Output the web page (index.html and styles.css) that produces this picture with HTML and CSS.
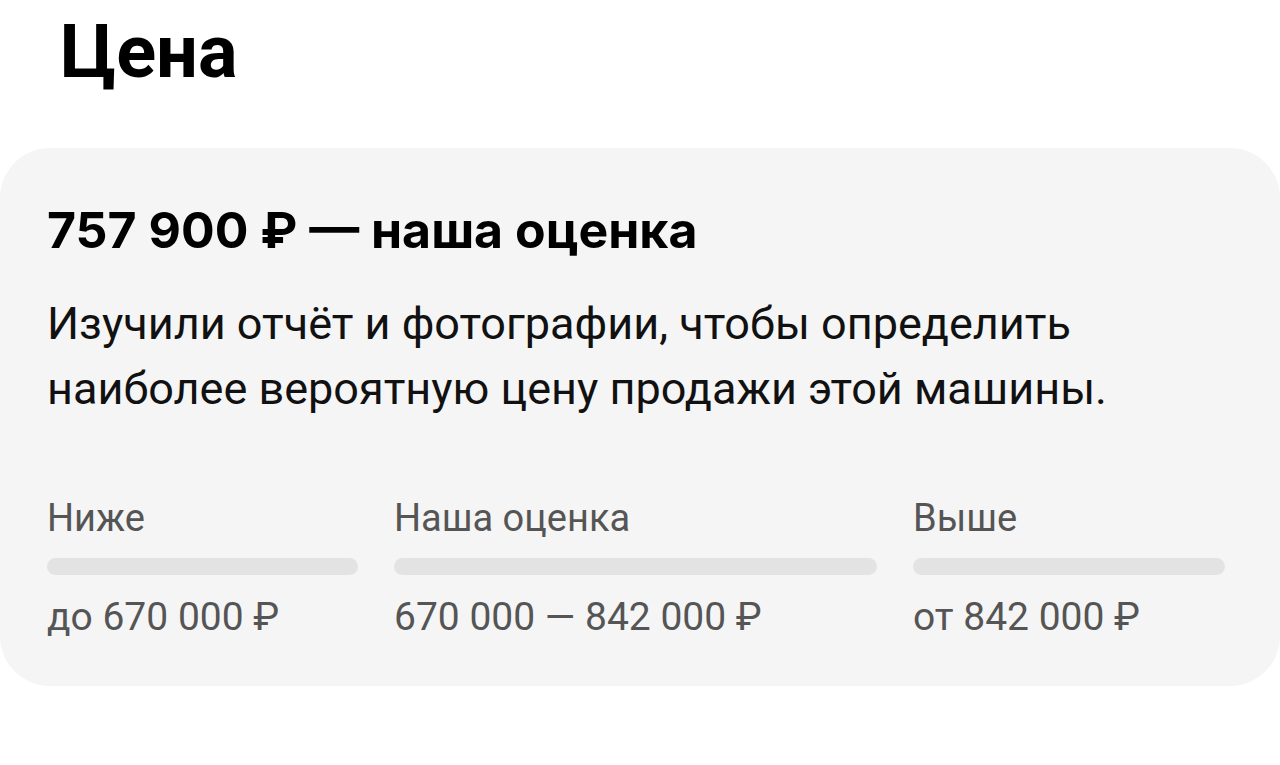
FILE: index.html
```html
<!DOCTYPE html>
<html lang="ru">
<head>
<meta charset="utf-8">
<link rel="stylesheet" href="styles.css">
</head>
<body>
<h1 class="title">Цена</h1>
<section class="card">
  <h2 class="estimate">757 900 ₽ — наша оценка</h2>
  <p class="desc">Изучили отчёт и фотографии, чтобы определить наиболее вероятную цену продажи этой машины.</p>
  <div class="ranges">
    <div class="range">
      <div class="label">Ниже</div>
      <div class="bar"></div>
      <div class="value">до 670 000 ₽</div>
    </div>
    <div class="range">
      <div class="label">Наша оценка</div>
      <div class="bar"></div>
      <div class="value">670 000 — 842 000 ₽</div>
    </div>
    <div class="range">
      <div class="label">Выше</div>
      <div class="bar"></div>
      <div class="value">от 842 000 ₽</div>
    </div>
  </div>
</section>
</body>
</html>
```
FILE: styles.css
```css
html, body {
  margin: 0;
  padding: 0;
  background: #ffffff;
}
body {
  font-family: Roboto, "Liberation Sans", sans-serif;
  color: #111;
  width: 1280px;
  height: 765px;
  overflow: hidden;
}
.title {
  margin: 0;
  padding: 10px 0 0 60px;
  font-size: 74px;
  font-weight: 700;
  line-height: 84px;
  color: #000;
}
.card {
  margin-top: 54px;
  background: #f5f5f5;
  border-radius: 50px;
  padding: 52px 55px 54px 47px;
  height: 538px;
  box-sizing: border-box;
}
.estimate {
  margin: 0;
  font-family: Inter, Roboto, sans-serif;
  font-size: 50px;
  font-weight: 700;
  line-height: 60px;
  color: #000;
}
.desc {
  margin: 31px 0 0;
  font-size: 45px;
  line-height: 65px;
  color: #111;
  max-width: 1120px;
}
.ranges {
  margin-top: 73px;
  display: grid;
  grid-template-columns: 311px 483px 312px;
  column-gap: 36px;
}
.label, .value {
  font-size: 38px;
  line-height: 48px;
  color: #555;
}
.value {
  font-size: 39px;
}
.bar {
  height: 17px;
  border-radius: 9px;
  background: #e3e3e3;
  margin: 16px 0 18px;
}
```
